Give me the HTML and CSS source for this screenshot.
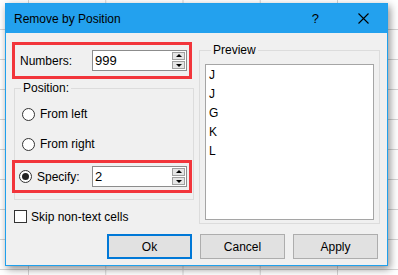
FILE: index.html
```html
<!DOCTYPE html>
<html>

<head>
    <meta charset="UTF-8">
    <title>Remove by Position</title>
    <link rel="stylesheet" href="styles.css">
</head>

<body>
    <div class="dialog">
        <div class="titlebar">
            <span class="title">Remove by Position</span>
            <span class="help">?</span>
            <svg class="close" width="11" height="11" viewBox="0 0 11 11">
                <path d="M0.5 0.5 L10.5 10.5 M10.5 0.5 L0.5 10.5" stroke="#000" stroke-width="1.1" fill="none"/>
            </svg>
        </div>

        <div class="content">
            <div class="columns">
                <div class="left">
                    <div class="mark numbers-row">
                        <span class="field-label">Numbers:</span>
                        <div class="spinbox">
                            <span class="value">999</span>
                            <span class="arrows">
                                <span class="arrow up"></span>
                                <span class="arrow down"></span>
                            </span>
                        </div>
                    </div>

                    <div class="group position-group">
                        <div class="group-title">Position:</div>
                        <div class="radio-row">
                            <span class="radio"></span>
                            <span>From left</span>
                        </div>
                        <div class="radio-row">
                            <span class="radio"></span>
                            <span>From right</span>
                        </div>
                        <div class="mark specify-row">
                            <span class="field-label radio-label">
                                <span class="radio checked"></span>
                                <span>Specify:</span>
                            </span>
                            <div class="spinbox">
                                <span class="value">2</span>
                                <span class="arrows">
                                    <span class="arrow up"></span>
                                    <span class="arrow down"></span>
                                </span>
                            </div>
                        </div>
                    </div>

                    <div class="check-row">
                        <span class="checkbox"></span>
                        <span>Skip non-text cells</span>
                    </div>
                </div>

                <div class="right">
                    <div class="group preview-group">
                        <div class="group-title">Preview</div>
                        <div class="listbox">
                            <div class="item">J</div>
                            <div class="item">J</div>
                            <div class="item">G</div>
                            <div class="item">K</div>
                            <div class="item">L</div>
                        </div>
                    </div>
                </div>
            </div>

            <div class="buttons">
                <button class="btn default">Ok</button>
                <button class="btn">Cancel</button>
                <button class="btn">Apply</button>
            </div>
        </div>
    </div>
</body>

</html>
```

FILE: styles.css
```css
body {
    margin: 0;
    font-family: "Liberation Sans", Arial, sans-serif;
    font-size: 12px;
    color: #000;
    background-color: #fff;
    background-image:
        linear-gradient(to right, #d4d4d4 1px, transparent 1px),
        linear-gradient(to bottom, #d4d4d4 1px, transparent 1px);
    background-size: 77.25px 30px;
    background-position: 28px 29px;
    height: 275px;
    overflow: hidden;
}

.dialog {
    margin: 3px 0 0 5px;
    width: 383px;
    height: 263px;
    box-sizing: border-box;
    border: 1px solid #1fa0ec;
    background: #f0f0f0;
    box-shadow: 2px 3px 8px rgba(0, 0, 0, 0.45);
}

.titlebar {
    height: 29px;
    background: #23a1ee;
    display: flex;
    align-items: center;
    padding-left: 8px;
}

.title {
    flex: 1;
    font-size: 12px;
}

.help {
    font-size: 13px;
    margin-right: 39px;
}

.close {
    margin-right: 18px;
}

.content {
    padding: 9px 7px 0 6px;
}

.columns {
    display: flex;
    gap: 5px;
}

.left {
    width: 182px;
}

.right {
    width: 181px;
}

/* red annotation boxes */
.mark {
    border: 3px solid #f2353b;
    box-sizing: border-box;
    width: 180px;
    display: flex;
    align-items: center;
}

.numbers-row {
    height: 37px;
}

.field-label {
    width: 77px;
    box-sizing: border-box;
    padding-left: 5px;
}

.spinbox {
    width: 95px;
    height: 21px;
    box-sizing: border-box;
    border: 1px solid #8c8c8c;
    background: #fff;
    display: flex;
    align-items: center;
    justify-content: space-between;
}

.value {
    padding-left: 2px;
    font-size: 13px;
}

.arrows {
    display: flex;
    flex-direction: column;
    gap: 1px;
    margin-right: 1px;
}

.arrow {
    width: 13px;
    height: 8px;
    box-sizing: border-box;
    border: 1px solid #a0a0a0;
    background: #e5e5e5;
    position: relative;
}

.arrow::after {
    content: "";
    position: absolute;
    left: 3px;
    width: 0;
    height: 0;
    border-left: 3px solid transparent;
    border-right: 3px solid transparent;
}

.arrow.up::after {
    top: 1px;
    border-bottom: 3px solid #000;
}

.arrow.down::after {
    top: 2px;
    border-top: 3px solid #000;
}

.group {
    border: 1px solid #dcdcdc;
    box-sizing: border-box;
}

.group-title {
    margin: -8px 0 0 6px;
    padding: 0 2px;
    width: fit-content;
    line-height: 14px;
    background: #f0f0f0;
}

.position-group {
    margin: 9px 0 0 2px;
    width: 180px;
    padding-bottom: 6px;
}

.position-group .group-title {
    margin-bottom: 4px;
}

.radio-row {
    height: 30px;
    display: flex;
    align-items: center;
    padding-left: 7px;
    gap: 5px;
}

.radio {
    width: 13px;
    height: 13px;
    box-sizing: border-box;
    border: 1px solid #333;
    border-radius: 50%;
    background: #fff;
    display: inline-flex;
    align-items: center;
    justify-content: center;
}

.radio.checked::after {
    content: "";
    width: 7px;
    height: 7px;
    border-radius: 50%;
    background: #222;
}

.specify-row {
    height: 33px;
    margin: 1px 0 0 -3px;
}

.radio-label {
    padding-left: 4px;
    display: flex;
    align-items: center;
    gap: 5px;
}

.check-row {
    margin: 10px 0 0 2px;
    height: 13px;
    display: flex;
    align-items: center;
    gap: 4px;
}

.checkbox {
    width: 13px;
    height: 13px;
    box-sizing: border-box;
    border: 1px solid #333;
    background: #fff;
}

.preview-group {
    margin-top: 8px;
    height: 174px;
    padding: 0 5px 3px 5px;
}

.preview-group .group-title {
    margin-bottom: 7px;
}

.listbox {
    height: 156px;
    box-sizing: border-box;
    border: 1px solid #a5a5a5;
    background: #fff;
    padding: 1px 3px;
}

.item {
    line-height: 19px;
}

.buttons {
    display: flex;
    justify-content: flex-end;
    gap: 8px;
    margin-top: 10px;
    padding-right: 2px;
}

.btn {
    width: 85px;
    height: 25px;
    box-sizing: border-box;
    border: 1px solid #adadad;
    background: #e1e1e1;
    font-family: "Liberation Sans", Arial, sans-serif;
    font-size: 12px;
    color: #000;
    padding: 0;
}

.btn.default {
    border: 2px solid #0078d7;
}
```
